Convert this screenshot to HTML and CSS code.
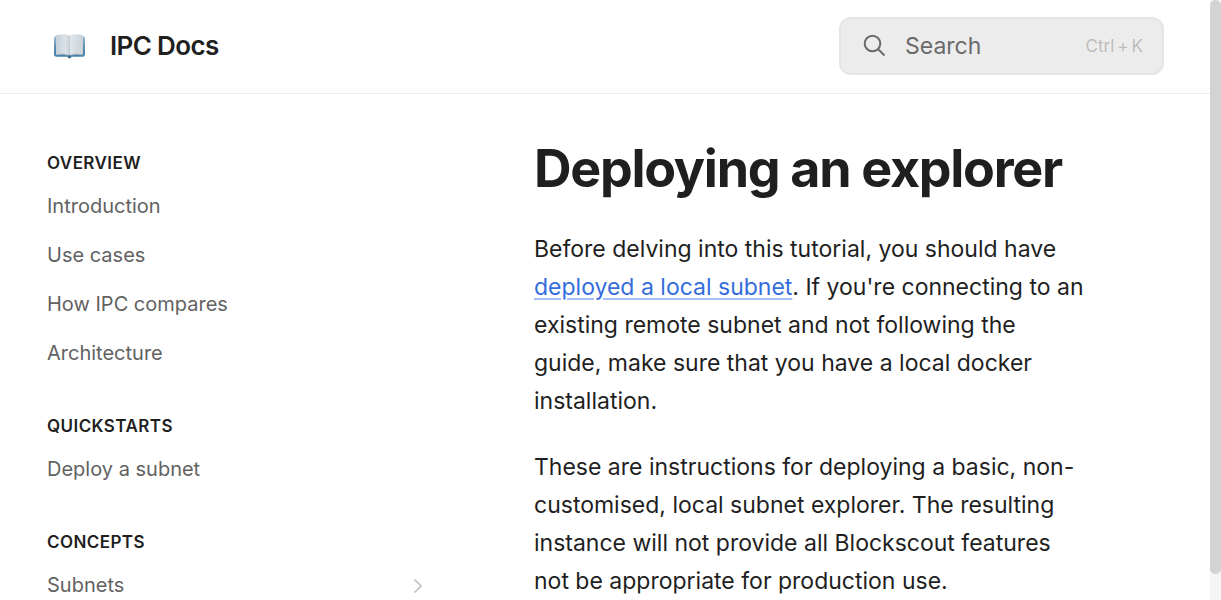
FILE: index.html
```html
<!DOCTYPE html>
<html lang="en">
<head>
<meta charset="utf-8">
<title>Deploying an explorer | IPC Docs</title>
<link rel="stylesheet" href="styles.css">
</head>
<body>
<div class="page">
  <header class="topbar">
    <a class="brand" href="#">
      <svg class="brand-icon" viewBox="0 0 46 46" aria-hidden="true">
        <defs>
          <linearGradient id="left" x1="0" x2="1"><stop offset="0" stop-color="#c5cfd7"/><stop offset=".7" stop-color="#dce3e8"/><stop offset="1" stop-color="#c8d1d8"/></linearGradient>
          <linearGradient id="right" x1="0" x2="1"><stop offset="0" stop-color="#e2e8ec"/><stop offset="1" stop-color="#c9d2d9"/></linearGradient>
          <linearGradient id="cover" x1="0" x2="0" y1="0" y2="1"><stop offset="0" stop-color="#9fb9cc"/><stop offset=".5" stop-color="#5a8fb3"/><stop offset="1" stop-color="#3f7ea8"/></linearGradient>
        </defs>
        <path d="M10 13Q8 13 8 15.500V31.500Q8 33.800 10.500 33.800H21.500Q22 35.400 23.500 35.400T25.500 33.800H36.500Q39 33.800 39 31.500V15.500Q39 13 37 13Z" fill="url(#cover)"/>
        <path d="M10 12.200Q18 10 23.500 12.500V32.500Q18 30 10 31.500Z" fill="url(#left)"/>
        <path d="M37 12.200Q29 10 23.500 12.500V32.500Q29 30 37 31.500Z" fill="url(#right)"/>
        <path d="M10 31.700Q18 30.200 23.500 32.500Q29 30.200 37 31.700" fill="none" stroke="#a9b4bb" stroke-width="1"/>
        <path d="M22.300 32.300H24.700V35H22.300Z" fill="#3c6685"/>
      </svg>
      <span class="brand-name">IPC Docs</span>
    </a>
    <button class="search" type="button">
      <svg class="search-icon" viewBox="0 0 24 24" aria-hidden="true"><circle cx="9.500" cy="9.500" r="7.800"/><path d="M15 15L21.500 21.500"/></svg>
      <span class="search-label">Search</span>
      <span class="search-keys"><span>Ctrl</span><span>+</span><span>K</span></span>
    </button>
  </header>
  <div class="body">
    <nav class="sidebar" aria-label="Contents">
      <section class="group">
        <h2 class="group-title">OVERVIEW</h2>
        <a class="item" href="#">Introduction</a>
        <a class="item" href="#">Use cases</a>
        <a class="item" href="#">How IPC compares</a>
        <a class="item" href="#">Architecture</a>
      </section>
      <section class="group">
        <h2 class="group-title">QUICKSTARTS</h2>
        <a class="item" href="#">Deploy a subnet</a>
      </section>
      <section class="group">
        <h2 class="group-title">CONCEPTS</h2>
        <a class="item" href="#">Subnets
          <svg class="chevron" viewBox="0 0 16 16" aria-hidden="true"><path d="M4.500 1.500L11 8L4.500 14.500"/></svg>
        </a>
      </section>
    </nav>
    <main class="content">
      <h1 class="title">Deploying an explorer</h1>
      <p class="text">Before delving into this tutorial, you should have <a class="link" href="#">deployed a local subnet</a>. If you're connecting to an existing remote subnet and not following the guide, make sure that you have a local docker installation.</p>
      <p class="text">These are instructions for deploying a basic, non-customised, local subnet explorer. The resulting instance will not provide all Blockscout features not be appropriate for production use.</p>
    </main>
  </div>
</div>
<div class="scrollbar" aria-hidden="true"><div class="thumb"></div></div>
</body>
</html>
```
FILE: styles.css
```css
* { box-sizing: border-box; }

body {
  margin: 0;
  background: #fff;
  color: #1f1f1f;
  font-family: Inter, "Liberation Sans", sans-serif;
}

.page {
  height: 100vh;
  overflow: hidden;
  padding-right: 11px;
}

.topbar {
  display: flex;
  align-items: center;
  justify-content: space-between;
  padding: 17px 46px 18px;
  border-bottom: 1px solid #ececec;
}

.brand {
  display: flex;
  align-items: center;
  gap: 18px;
  color: #1f1f1f;
  text-decoration: none;
}

.brand-icon { width: 46px; height: 46px; }

.brand-name {
  font-size: 26px;
  line-height: 36px;
  font-weight: 600;
  letter-spacing: -0.025em;
}

.search {
  display: flex;
  align-items: center;
  width: 325px;
  height: 58px;
  padding: 0 19px 0 22px;
  border: 2px solid #e5e5e5;
  border-radius: 12px;
  background: #ececec;
  font-family: inherit;
  color: #6a6a6a;
}

.search-icon {
  width: 24px;
  height: 24px;
  margin-right: 18px;
  fill: none;
  stroke: #6a6a6a;
  stroke-width: 2;
}

.search-label { flex: 1; text-align: left; font-size: 23px; }

.search-keys {
  display: flex;
  gap: 3px;
  font-size: 17px;
  color: #bcbcbc;
}

.body { display: flex; }

.sidebar {
  flex: none;
  width: 440px;
  padding: 57px 14px 0 47px;
}

.group { margin-bottom: 36px; }

.group-title {
  margin: 0 0 7px;
  font-size: 17px;
  line-height: 24px;
  font-weight: 600;
  letter-spacing: 0.025em;
}

.item {
  display: flex;
  align-items: center;
  justify-content: space-between;
  padding: 10px 0;
  font-size: 20px;
  line-height: 29px;
  color: #626262;
  text-decoration: none;
}

.chevron {
  width: 16px;
  height: 16px;
  fill: none;
  stroke: #bcbcbc;
  stroke-width: 1.5;
}

.content {
  flex: 1;
  padding: 46px 123px 0 94px;
}

.title {
  margin: 0 0 32px;
  font-size: 52px;
  line-height: 58px;
  font-weight: 700;
  letter-spacing: -0.025em;
}

.text {
  margin: 0 0 28px;
  font-size: 23px;
  line-height: 38px;
}

.link {
  color: #346ddb;
  text-decoration: underline;
  text-decoration-color: #a5c0f2;
  text-decoration-thickness: 2px;
  text-underline-offset: 3px;
}

.scrollbar {
  position: fixed;
  top: 0;
  right: 0;
  bottom: 0;
  width: 11px;
  background: #f5f5f5;
}

.thumb {
  height: calc(100% - 26px);
  border-radius: 6px;
  background: #d3d3d3;
}
```
